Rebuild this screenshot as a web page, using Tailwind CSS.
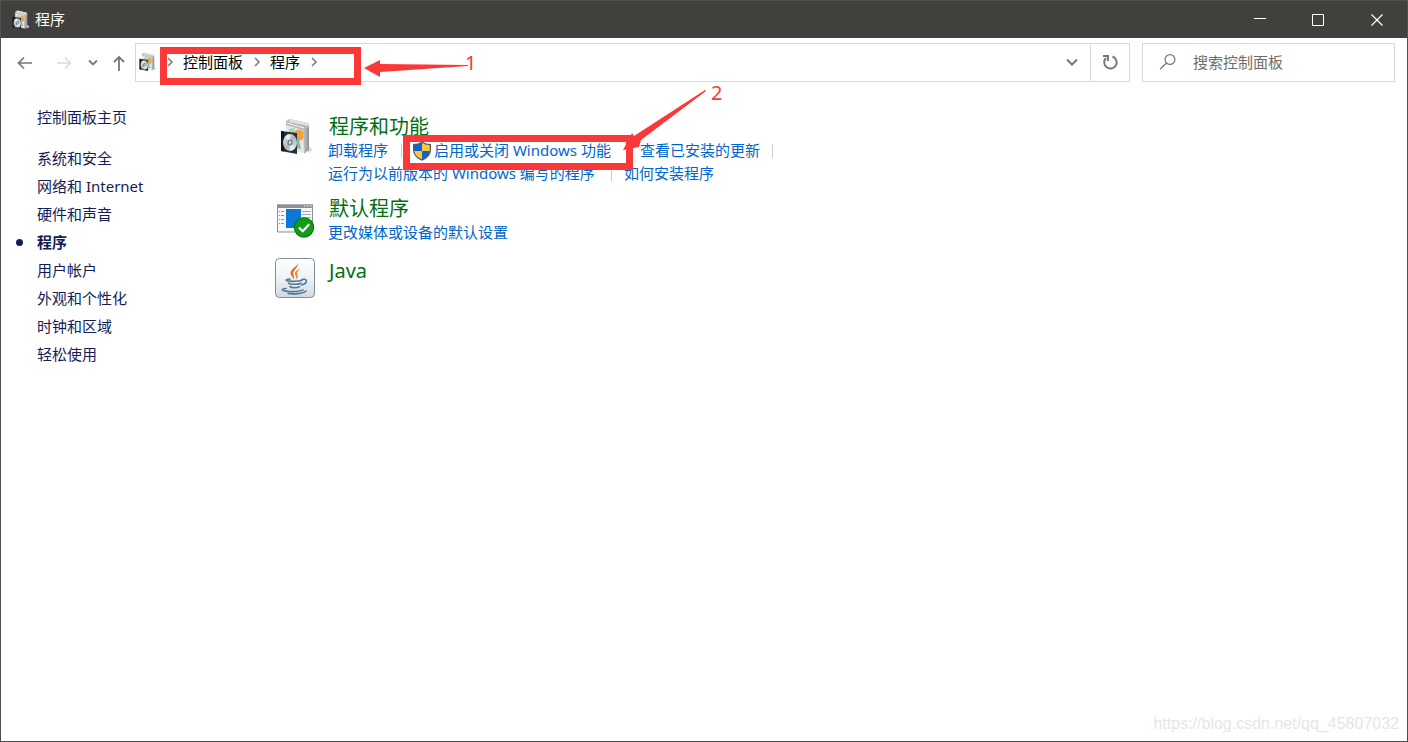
<!DOCTYPE html>
<html lang="zh-CN">
<head>
<meta charset="utf-8">
<title>程序</title>
<script src="https://cdn.jsdelivr.net/npm/@tailwindcss/browser@4"></script>
</head>
<body class="bg-white font-['Noto_Sans','Noto_Sans_CJK_SC',sans-serif] text-[15px] leading-[23px]">
<svg class="absolute h-0 w-0" aria-hidden="true">
  <defs>
    <linearGradient id="disc" x1="0" y1="0" x2="1" y2="1"><stop offset="0" stop-color="#e9eef1"/><stop offset=".5" stop-color="#aab6bd"/><stop offset="1" stop-color="#eef2f4"/></linearGradient>
    <linearGradient id="boxside" x1="0" y1="0" x2="1" y2="0"><stop offset="0" stop-color="#c9cbcd"/><stop offset="1" stop-color="#8d9093"/></linearGradient>
    <linearGradient id="tile" x1="0" y1="0" x2="0" y2="1"><stop offset="0" stop-color="#ffffff"/><stop offset=".55" stop-color="#eef1f4"/><stop offset="1" stop-color="#cfd8e0"/></linearGradient>
    <symbol id="box" viewBox="0 0 34 38">
      <path d="M28 35l5-3-4-4z" fill="#dcdcdc"/>
      <path d="M6 5l18 4v26L6 31z" fill="#e6e8e8"/>
      <circle cx="19" cy="17" r="5.500" fill="#f7a13c"/>
      <path d="M9 11l6-1-2 9-4 1z" fill="#a5d3bb"/>
      <path d="M14 22l4-4 3 13-6-1z" fill="#7dba9d"/>
      <path d="M23 10l6-2v24l-5 4z" fill="url(#boxside)"/>
      <path d="M6 7q-1-5 4-6l18 4q2 2 0 5l-5 2z" fill="#b4b7b9"/>
      <path d="M10 1l18 4q1 1 0 3L9 4z" fill="#dfe1e2"/>
      <path d="M7 5l17 5" stroke="#f7f7f7" fill="none"/>
      <path d="M1 13l16 2v21L1 33z" fill="#263039"/>
      <path d="M1 13l3 .5v20L1 33z" fill="#11171c"/>
      <ellipse cx="10" cy="24.500" rx="7" ry="8.500" fill="url(#disc)"/>
      <path d="M10 24l-5-5q2-3 5-3zM10 25l5 5q-2 3-5 3z" fill="#fff" opacity=".6"/>
      <ellipse cx="10" cy="24.500" rx="2.500" ry="3" fill="#74838c"/>
      <ellipse cx="10" cy="24.500" rx="1" ry="1.300" fill="#fff"/>
    </symbol>
  </defs>
</svg>

<div class="relative flex min-h-screen flex-col border border-[#4f4e4d]">
  <header class="flex h-[37px] items-center bg-[#42403d] text-white">
    <svg class="ml-[11px] h-5 w-[18px]"><use href="#box"/></svg>
    <h1 class="ml-[5px] flex-1">程序</h1>
    <button type="button" aria-label="最小化" class="flex h-full w-[58px] items-center justify-center"><svg width="12" height="12" stroke="#fff" shape-rendering="crispEdges"><path d="M0 4.500h12"/></svg></button>
    <button type="button" aria-label="最大化" class="flex h-full w-[58px] items-center justify-center"><svg width="12" height="12" fill="none" stroke="#fff"><path d="M.5.5h11v11H.5z"/></svg></button>
    <button type="button" aria-label="关闭" class="flex h-full w-[60px] items-center justify-center"><svg width="12" height="12" stroke="#fff" stroke-width="1.200"><path d="M.5.5l11 11M11.500.5l-11 11"/></svg></button>
  </header>

  <div class="flex h-[48px] items-center pr-3">
    <nav class="flex w-[134px] items-center pl-4 pt-0.5" aria-label="导航">
      <button type="button" aria-label="后退"><svg width="16" height="14" fill="none" stroke="#777" stroke-width="1.700"><path d="M15 7H1.500M7 1.500L1.500 7 7 12.500"/></svg></button>
      <button type="button" aria-label="前进" class="ml-[23px]"><svg width="16" height="14" fill="none" stroke="#d9d9d9" stroke-width="1.500"><path d="M1 7h13.500M9 1.500L14.500 7 9 12.500"/></svg></button>
      <button type="button" aria-label="最近位置" class="ml-4"><svg width="10" height="8" fill="none" stroke="#777" stroke-width="1.800"><path d="M1 1.500l4 4 4-4"/></svg></button>
      <button type="button" aria-label="向上" class="ml-[15px]"><svg width="12" height="16" fill="none" stroke="#777" stroke-width="1.800"><path d="M6 16V2M1 7l5-5 5 5"/></svg></button>
    </nav>
    <div class="flex h-[39px] flex-1 items-center border border-[#d9d9d9]">
      <svg class="ml-[3px] h-5 w-[18px]"><use href="#box"/></svg>
      <svg class="ml-[10px]" width="7" height="10" fill="none" stroke="#777" stroke-width="1.500"><path d="M1 1l4 4-4 4"/></svg>
      <button type="button" class="ml-[9px] text-black">控制面板</button>
      <svg class="ml-[11px]" width="7" height="10" fill="none" stroke="#777" stroke-width="1.500"><path d="M1 1l4 4-4 4"/></svg>
      <button type="button" class="ml-[9px] text-black">程序</button>
      <svg class="ml-[11px]" width="7" height="10" fill="none" stroke="#777" stroke-width="1.500"><path d="M1 1l4 4-4 4"/></svg>
      <button type="button" aria-label="以前的位置" class="ml-auto flex h-full w-9 items-center justify-center"><svg width="12" height="8" fill="none" stroke="#777" stroke-width="2"><path d="M1 1.500l5 5 5-5"/></svg></button>
      <button type="button" aria-label="刷新" class="flex h-full w-[39px] items-center justify-center border-l border-[#d9d9d9]"><svg width="16" height="16" fill="none" stroke="#777" stroke-width="1.900"><path d="M10.500 2.500A6.200 6.200 0 1 1 4 4M1 2h5v5"/></svg></button>
    </div>
    <label class="ml-3 flex h-[39px] w-[253px] items-center border border-[#d9d9d9]">
      <svg class="ml-4" width="18" height="16" fill="none" stroke="#777" stroke-width="1.200"><circle cx="11" cy="5.500" r="4.900"/><path d="M7.500 9L1 15.300"/></svg>
      <input type="search" aria-label="搜索控制面板" placeholder="搜索控制面板" class="ml-4 w-[190px] outline-none placeholder:text-[#6d6d6d]">
    </label>
  </div>

  <main class="flex flex-1">
    <aside class="w-[262px] pt-[17px] text-[#151c55]">
      <a href="#" class="block pl-9 leading-7">控制面板主页</a>
      <ul class="mt-[13px] leading-7">
        <li><a href="#" class="block pl-9">系统和安全</a></li>
        <li><a href="#" class="block pl-9">网络和 Internet</a></li>
        <li><a href="#" class="block pl-9">硬件和声音</a></li>
        <li class="flex items-center font-bold"><span class="ml-[15px] h-[7px] w-[7px] rounded-full bg-[#151c55]"></span><a href="#" aria-current="page" class="ml-[14px]">程序</a></li>
        <li><a href="#" class="block pl-9">用户帐户</a></li>
        <li><a href="#" class="block pl-9">外观和个性化</a></li>
        <li><a href="#" class="block pl-9">时钟和区域</a></li>
        <li><a href="#" class="block pl-9">轻松使用</a></li>
      </ul>
    </aside>

    <div class="flex-1 pl-3 pt-[27px] text-[#0066cc]">
      <section class="flex h-[82px]">
        <div class="w-[53px] pl-[5px] pt-[5px]"><svg width="34" height="38"><use href="#box"/></svg></div>
        <div>
          <h2 class="pl-px pt-px text-xl leading-[25px]"><a href="#" class="text-[#006f12]">程序和功能</a></h2>
          <div class="flex items-center">
            <a href="#">卸载程序</a>
            <span class="ml-[13px] h-[14px] w-px bg-[#ccc]"></span>
            <a href="#" class="ml-[10px] flex items-center">
              <svg width="20" height="20" viewBox="0 0 20 20"><path d="M10 .5Q6 3 1 3v6q0 7 9 10.800Q19 16 19 9V3q-5 0-9-2.500z" fill="#555d64"/><path d="M10 2Q7 4 2.300 4.200V10H10z" fill="#0d65c9"/><path d="M10 2q3 2 7.700 2.200V10H10z" fill="#ffc83d"/><path d="M2.300 10H10v8.300Q3 15.500 2.300 10z" fill="#ffc83d"/><path d="M17.700 10H10v8.300q7-2.800 7.700-8.300z" fill="#0d65c9"/></svg>
              <span class="ml-0.5">启用或关闭 Windows 功能</span>
            </a>
            <span class="ml-4 h-[14px] w-px bg-[#ccc]"></span>
            <a href="#" class="ml-3">查看已安装的更新</a>
            <span class="ml-3 h-[14px] w-px bg-[#ccc]"></span>
          </div>
          <div class="flex items-center">
            <a href="#">运行为以前版本的 Windows 编写的程序</a>
            <span class="ml-4 h-[14px] w-px bg-[#ccc]"></span>
            <a href="#" class="ml-3">如何安装程序</a>
          </div>
        </div>
      </section>
      <section class="flex h-[63px]">
        <div class="w-[53px] pl-0.5 pt-[9px]">
          <svg width="38" height="34" viewBox="0 0 38 34"><path d="M.5 1h35v27H.5z" fill="#f6f7f8" stroke="#8a9197"/><path d="M0 .5h36V4H0z" fill="#8a9197"/><path d="M27 2h1.500M30 2h1.500M33 2h1.500" stroke="#fff"/><path d="M2 7.500h5M2 11.500h5M2 15.500h5M2 19.500h5" stroke="#8a9197" stroke-dasharray="1 1 3 0"/><path d="M25 7.500h9M25 10.500h9M25 13.500h9" stroke="#a3a8ad"/><path d="M9 5h15v19H9z" fill="#0b78d8"/><circle cx="27" cy="23.500" r="10.200" fill="#087d0e"/><circle cx="27" cy="23.500" r="9" fill="#129d17"/><path d="M22 23.500l3.700 3.700 6.500-7" fill="none" stroke="#fff" stroke-width="2.200"/></svg>
        </div>
        <div>
          <h2 class="pl-px pt-px text-xl leading-[25px]"><a href="#" class="text-[#006f12]">默认程序</a></h2>
          <a href="#" class="block">更改媒体或设备的默认设置</a>
        </div>
      </section>
      <section class="flex">
        <div class="w-[53px]">
          <svg width="40" height="40" viewBox="0 0 40 40"><rect x=".5" y=".5" width="39" height="39" rx="4" fill="url(#tile)" stroke="#7d8d99"/><path d="M22.500 3c2.500 5-7 7-7 12 0 2.500 2.500 4 3.500 6.500.8-3-1.500-5-.5-7.500 1-2.700 6-5.500 4-11z" fill="#e76f1c"/><path d="M26 10.500c-3 1-6.500 2.800-6 5.500.4 1.800 2 3 .8 5.500 4-3.500.9-4.500 1.200-6.500.1-1.500 2-3 4-4.500z" fill="#ef8938"/><g fill="none" stroke="#4f7999" stroke-width="1.600" stroke-linecap="round"><path d="M15 21c-3 .4-4.500 1-3.500 1.500 3 1.300 12.500 1 15.500-.3M13.500 25c1.500 1.700 9.500 1.700 12.500.2M15 28.500c1 1.600 7 1.500 9.500.2M27 21.500c6-1.500 6 4-.3 5.500M11 30.500c-5 .7-5 2 0 2.600 6 1 14 .5 17-1.200M13 35.500c5 .8 15 .3 18-2.500"/></g></svg>
        </div>
        <h2 class="pl-px text-xl leading-[26px]"><a href="#" class="text-[#006f12]">Java</a></h2>
      </section>
    </div>
  </main>

  <div class="pointer-events-none absolute left-[159px] top-[46px] h-[38px] w-[201px] border-[7px] border-[#fb3838]"></div>
  <div class="pointer-events-none absolute left-[402px] top-[134px] h-[35px] w-[230px] border-[7px] border-[#fb3838]"></div>
  <svg class="pointer-events-none absolute left-[363px] top-[59px]" width="105" height="18" fill="#fb3838"><path d="M0 8L16 0v4l88 1v1L16 12v5z"/></svg>
  <svg class="pointer-events-none absolute left-[622px] top-[88px]" width="84" height="62" fill="#fb3838"><path d="M0 61L9 44l2 3L82 1l1 1-65 49-2 7z"/></svg>
  <span class="pointer-events-none absolute left-[464px] top-[50px] text-xl leading-6 text-[#fb3838]">1</span>
  <span class="pointer-events-none absolute left-[710px] top-[80px] text-xl leading-6 text-[#fb3838]">2</span>
  <span class="pointer-events-none absolute bottom-[5px] right-2 font-['Liberation_Sans',sans-serif] text-base text-[#e6e6e6]">https://blog.csdn.net/qq_45807032</span>
</div>
</body>
</html>
